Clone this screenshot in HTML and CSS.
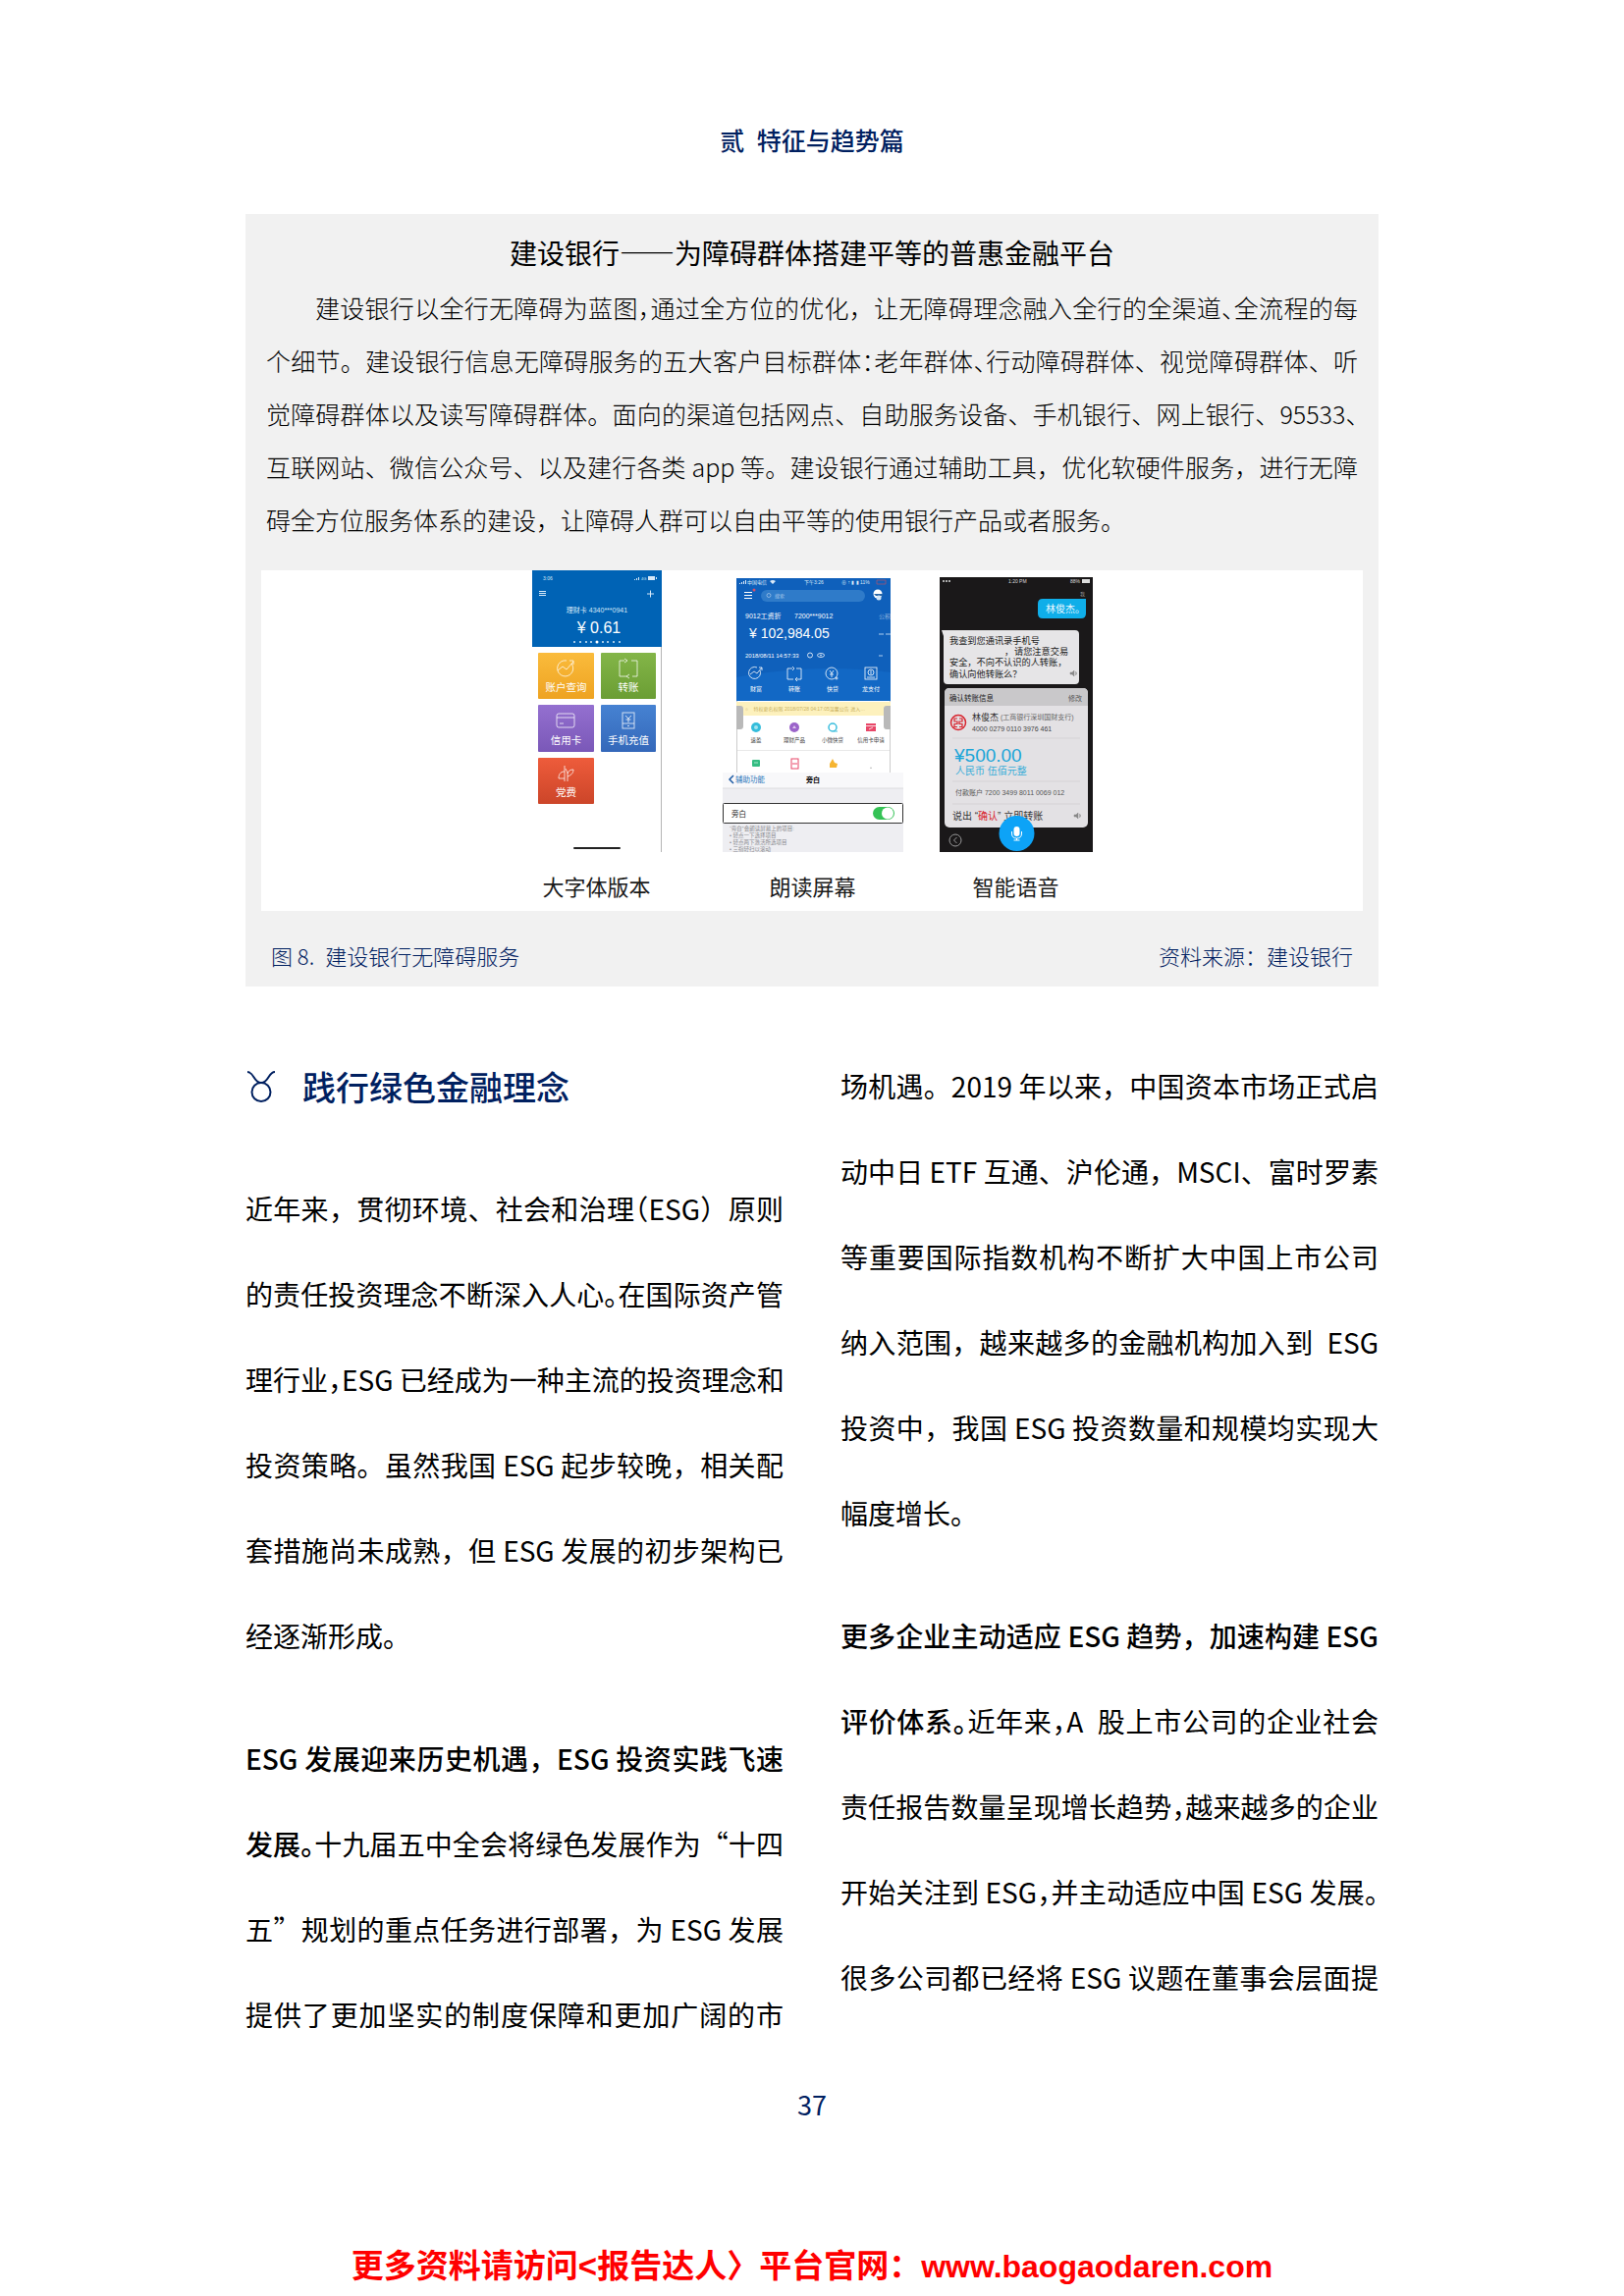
FILE: index.html
```html
<!DOCTYPE html>
<html lang="zh-CN">
<head>
<meta charset="utf-8">
<meta name="viewport" content="width=device-width, initial-scale=1">
<title>贰 特征与趋势篇</title>
<link rel="stylesheet" href="styles.css">
</head>
<body>
<div class="page">
  <header class="running-head">贰&ensp;特征与趋势篇</header>

  <main>
    <section class="case">
      <h2 class="case-title">建设银行——为障碍群体搭建平等的普惠金融平台</h2>
      <p class="case-text">
        <span class="line line-indent">建设银行以全行无障碍为蓝图<span class="half">，</span>通过全方位的优化，让无障碍理念融入全行的全渠道<span class="half">、</span>全流程的每</span>
        <span class="line">个细节。建设银行信息无障碍服务的五大客户目标群体<span class="half">：</span>老年群体<span class="half">、</span>行动障碍群体、视觉障碍群体、听</span>
        <span class="line">觉障碍群体以及读写障碍群体。面向的渠道包括网点、自助服务设备、手机银行、网上银行、95533<span class="half">、</span></span>
        <span class="line">互联网站、微信公众号、以及建行各类 app 等。建设银行通过辅助工具，优化软硬件服务，进行无障</span>
        <span class="line line-end">碍全方位服务体系的建设，让障碍人群可以自由平等的使用银行产品或者服务。</span>
      </p>

      <div class="phones">
        <figure class="phone phone-first">
          <svg width="132" height="287" viewBox="0 0 132 287" role="img" aria-label="大字体版本">
            <defs>
              <linearGradient id="yellow" x2="0" y2="1"><stop stop-color="#fabb3c"/><stop offset="1" stop-color="#eea321"/></linearGradient>
              <linearGradient id="green" x2="0" y2="1"><stop stop-color="#83b548"/><stop offset="1" stop-color="#6b9e34"/></linearGradient>
              <linearGradient id="purple" x2="0" y2="1"><stop stop-color="#9470d0"/><stop offset="1" stop-color="#7a58b8"/></linearGradient>
              <linearGradient id="blue" x2="0" y2="1"><stop stop-color="#4682d2"/><stop offset="1" stop-color="#3468ba"/></linearGradient>
              <linearGradient id="red" x2="0" y2="1"><stop stop-color="#ee5c3b"/><stop offset="1" stop-color="#cc4529"/></linearGradient>
            </defs>
            <path d="M131.500 78V287" stroke="#b5b5b5"/>
            <rect width="132" height="78" fill="#0063b5"/>
            <g fill="#d5e8f8">
              <text x="11" y="10" font-size="5">3:06</text>
              <path d="M104 10v-1h1v1zm2 0v-2h1v2zm2 0v-3h1v3zM118 6h7v4h-7zM126 7h1v2h-1z"/>
              <text x="111" y="10" font-size="4">4G</text>
              <text x="66" y="43" font-size="7" text-anchor="middle">理财卡 4340***0941</text>
              <text x="68" y="64" font-size="16" fill="#fff" text-anchor="middle">¥ 0.61</text>
              <g><circle cx="43" cy="73" r="1"/><circle cx="49" cy="73" r="1"/><circle cx="55" cy="73" r="1"/><circle cx="60" cy="73" r="1"/><circle cx="66" cy="73" r="1.500" fill="#fff"/><circle cx="72" cy="73" r="1"/><circle cx="77" cy="73" r="1"/><circle cx="83" cy="73" r="1"/><circle cx="89" cy="73" r="1"/></g>
            </g>
            <path d="M7 21.500h7M7 23.500h7M7 25.500h7M117 24h7M120.500 20.500v7" stroke="#d5e8f8" fill="none"/>
            <rect x="6" y="84" width="57" height="47" rx="1" fill="url(#yellow)"/>
            <rect x="70" y="84" width="56" height="47" rx="1" fill="url(#green)"/>
            <rect x="6" y="137" width="57" height="48" rx="1" fill="url(#purple)"/>
            <rect x="70" y="137" width="56" height="48" rx="1" fill="url(#blue)"/>
            <rect x="6" y="191" width="57" height="47" rx="1" fill="url(#red)"/>
            <g fill="none" stroke="#fff" stroke-opacity=".75">
              <path d="M40 95a8 8 0 1 1-5-3M26 102l5-4 4 3 7-8M38 92h4v4"/>
              <path d="M94 92h-5v16h7M101 92h6v16h-5M94 90l3 2-3 2M99 106l-3 2 3 2"/>
              <rect x="25" y="146" width="18" height="14" rx="2"/><path d="M25 150h18M28 156h4"/>
              <rect x="92" y="145" width="12" height="16"/><path d="M92 156h12M97 158.500h2M95 148l3 3 3-3M98 151v4M95.500 152h5"/>
              <path d="M33 199v16M33 205c-5 0-6 4-6 7h6M36 215v-9l-2-4M36 210c3-1 6-3 6-7-3 0-5 1-6 4"/>
            </g>
            <g fill="#fff" font-size="10.500" text-anchor="middle">
              <text x="34.500" y="123">账户查询</text><text x="98" y="123">转账</text>
              <text x="34.500" y="177">信用卡</text><text x="98" y="177">手机充值</text>
              <text x="34.500" y="230">党费</text>
            </g>
            <rect x="42" y="282" width="48" height="2" rx="1" fill="#222"/>
          </svg>
          <figcaption>大字体版本</figcaption>
        </figure>

        <figure class="phone">
          <svg width="184" height="279" viewBox="0 0 184 279" role="img" aria-label="朗读屏幕">
            <path d="M14.500 125v73M170.500 125v73" stroke="#ccc"/>
            <rect x="14" width="157" height="125" fill="#0f60bb"/>
            <path d="M14 101q80-15 157-5v29H14z" fill="#1268c5"/>
            <g fill="#dbe9f8" font-size="5">
              <path d="M17 6v-1h1v1zm2 0v-2h1v2zm2 0v-3h1v3zm2 0v-4h1v4zM48 3q3-2 6 0l-3 3z"/>
              <text x="25" y="6">中国电信</text><text x="83" y="6">下午3:26</text><text x="121" y="6">⊕ ↑ ▮ ▮ 11%</text>
            </g>
            <path d="M157 2h9v4h-9z" fill="none" stroke="#cf5060" stroke-width=".6"/>
            <rect x="39" y="12" width="106" height="12" rx="6" fill="#2f7bc9"/>
            <circle cx="47" cy="17.500" r="2" fill="none" stroke="#a9c9ea" stroke-width=".7"/>
            <text x="53" y="20" font-size="5" fill="#a9c9ea">搜索</text>
            <path d="M22 14.500h8M22 17.500h8M22 20.500h8" stroke="#fff"/><circle cx="32" cy="12" r="1.500" fill="#d55069"/>
            <circle cx="158" cy="16" r="4.500" fill="#fff"/><path d="M154 16h9v2h-7z" fill="#2a68a8"/><circle cx="159" cy="20" r="2.500" fill="#d3e7f9"/>
            <g fill="#fff">
              <text x="23" y="41" font-size="7">9012工资折</text><text x="73" y="41" font-size="7">7200***9012</text>
              <text x="27" y="61" font-size="14">¥ 102,984.05</text>
              <text x="23" y="81" font-size="6">2018/08/11 14:57:33</text>
              <text x="159" y="41" font-size="6" opacity=".5">公积</text><path d="M159 57h5M166 57h5M159 79h4" stroke="#b0cff0"/>
              <g font-size="6" text-anchor="middle"><text x="34" y="115">财富</text><text x="73" y="115">转账</text><text x="112" y="115">快贷</text><text x="151" y="115">龙支付</text></g>
            </g>
            <g fill="none" stroke="#fff" stroke-width=".8">
              <path d="M38 94a6 6 0 1 1-3-3M28 98l4-3 3 2 5-6M37 91h3v3"/>
              <path d="M71 92h-5v11h6M75 92h5v11h-5M71 90l2 2-2 2M76 101l-2 2 2 2"/>
              <circle cx="111" cy="97" r="6"/><path d="M109 94l2 3 2-3M111 97v4M109 98h4"/><circle cx="116" cy="102" r="1"/>
              <rect x="145" y="91" width="12" height="12"/><circle cx="151" cy="96" r="3"/><path d="M147 101h8M151 94v4"/>
              <circle cx="89" cy="78.500" r="2.500"/><ellipse cx="100" cy="78.500" rx="3.500" ry="2"/><circle cx="100" cy="78.500" r=".5"/>
            </g>
            <rect x="14" y="126" width="157" height="14" fill="#fdf1bd"/>
            <text x="22" y="135" font-size="5" fill="#c9b060">☼　特权更名权限 2018/07/28 04:17:05温馨公告 进入…</text>
            <path d="M14 130h4q3 0 3 3v18q0 3-3 3h-4zM171 130h-4q-3 0-3 3v18q0 3 3 3h4z" fill="#b9b9b9"/>
            <circle cx="34" cy="152" r="5" fill="#35bddb"/><circle cx="34" cy="152" r="2" fill="#a3e4ef"/>
            <circle cx="73" cy="152" r="5" fill="#9b64ca"/><path d="M71 153l2-3 2 3z" fill="#dfc6ee"/>
            <circle cx="112" cy="152" r="4" fill="none" stroke="#39bddd" stroke-width="1.500"/><path d="M113 156h4" stroke="#39bddd"/>
            <rect x="146" y="148" width="10" height="8" fill="#e84768"/><path d="M146 150.500h10M149 154l4-2" stroke="#fff" stroke-width=".8"/>
            <g fill="#444" font-size="5.500" text-anchor="middle"><text x="34" y="167">速盈</text><text x="73" y="167">理财产品</text><text x="112" y="167">小微快贷</text><text x="151" y="167">信用卡申请</text></g>
            <path d="M15 175.500h155" stroke="#e9e9e9"/>
            <rect x="30" y="185" width="8" height="7" rx="1" fill="#35bd83"/><path d="M32 188h4" stroke="#a9e6cb"/>
            <rect x="70" y="184" width="7" height="10" fill="none" stroke="#e84768"/><path d="M71 189h5" stroke="#e84768"/>
            <path d="M109 189l3-5 2 4 3 1-1 4h-7z" fill="#f6b532"/><path d="M150 194l1-2 1 2z" fill="#bbb"/>
            <rect y="198" width="184" height="81" fill="#eeeef2"/><rect y="198" width="184" height="16" fill="#f8f8fa"/><path d="M0 214h184" stroke="#d2d2d6" stroke-width=".7"/>
            <path d="M11 201l-4 4 4 4" fill="none" stroke="#1c5aa4" stroke-width="1.500"/>
            <text x="13" y="208" font-size="7.500" fill="#2b77bb">辅助功能</text><text x="92" y="208" font-size="7" font-weight="700" text-anchor="middle">旁白</text>
            <rect x=".500" y="229.500" width="183" height="20" rx="1" fill="#fff" stroke="#333"/>
            <text x="9" y="243" font-size="7.500" fill="#222">旁白</text>
            <rect x="153" y="233" width="22" height="13" rx="6.500" fill="#34c255"/><circle cx="168" cy="239.500" r="6" fill="#fff"/>
            <g font-size="5.500" fill="#88888d"><text x="7" y="257">“旁白”会朗读屏幕上的项目:</text><text x="7" y="264">• 轻点一下选择项目</text><text x="7" y="271">• 轻点两下激活所选项目</text><text x="7" y="278">• 三指轻扫以滚动</text></g>
          </svg>
          <figcaption>朗读屏幕</figcaption>
        </figure>

        <figure class="phone">
          <svg width="156" height="280" viewBox="0 0 156 280" role="img" aria-label="智能语音">
            <rect width="156" height="280" fill="#1a1819"/>
            <g fill="#ddd" font-size="5"><circle cx="4" cy="4" r="1"/><circle cx="7" cy="4" r="1"/><circle cx="10" cy="4" r="1"/><text x="70" y="6">1:20 PM</text><text x="133" y="6">88%</text><rect x="145" y="2" width="8" height="4"/><text x="143" y="19" fill="#999">我</text></g>
            <path d="M105 22h44v15q0 5-5 5h-39q-5 0-5-5V27q0-5 5-5z" fill="#0faee9"/>
            <text x="108" y="36" font-size="10" fill="#e9f8ff">林俊杰。</text>
            <path d="M2 54h136q4 0 4 4v47q0 4-4 4H8q-4 0-4-4V60z" fill="#e6e5e7"/>
            <g font-size="9.200" fill="#222"><text x="10" y="68">我查到您通讯录手机号</text><text x="66" y="79">，</text><text x="76" y="79">请您注意交易</text><text x="10" y="90">安全，不向不认识的人转账，</text><text x="10" y="102">确认向他转账么？</text></g>
            <path d="M133 97h2l2-2v6l-2-2h-2zM138.500 96q2 2 0 4" fill="#888" stroke="#888" stroke-width=".5"/>
            <rect x="5" y="113" width="146" height="142" rx="5" fill="#e3e1e4"/>
            <path d="M5 131v-13q0-5 5-5h136q5 0 5 5v13z" fill="#c9c8ca"/>
            <text x="10" y="126" font-size="7.500" fill="#222">确认转账信息</text><text x="131" y="126" font-size="7" fill="#555">修改</text>
            <circle cx="19" cy="148" r="7.500" fill="none" stroke="#d8242e" stroke-width="1.500"/>
            <path d="M18 144h-3v3h3v2.500h-3v3h3M20 144h3v3h-3v2.500h3v3h-3" fill="none" stroke="#d8242e" stroke-width="1.200"/>
            <text x="33" y="146" font-size="9" fill="#333">林俊杰</text><text x="62" y="145" font-size="7" fill="#666">(工商银行深圳国财支行)</text>
            <text x="33" y="157" font-size="7" fill="#444">4000 0279 0110 3976 461</text>
            <text x="15" y="188" font-size="19" fill="#1ba5d8">¥500.00</text>
            <text x="16" y="201" font-size="10" fill="#39add8">人民币 伍佰元整</text>
            <text x="16" y="222" font-size="7" fill="#555">付款账户 7200 3499 8011 0069 012</text>
            <path d="M13 164h130M13 208h130M13 231h130" stroke="#cfcdd0" stroke-width=".7"/>
            <text x="13" y="247" font-size="10" fill="#333">说出 “<tspan fill="#d8242e">确认</tspan>” 立即转账</text>
            <path d="M137 242h2l2-2v6l-2-2h-2zM142.500 241q2 2 0 4" fill="#888" stroke="#888" stroke-width=".5"/>
            <circle cx="78.500" cy="261" r="18" fill="#0da3f7"/>
            <rect x="75.500" y="254" width="6" height="10" rx="3" fill="#fff"/><path d="M73.500 259v2q0 5 5 5t5-5v-2M78.500 266v2M75.500 268h6" fill="none" stroke="#fff"/>
            <circle cx="16" cy="268" r="6" fill="none" stroke="#999"/><path d="M17.500 265l-3 3 3 3" fill="none" stroke="#999"/>
          </svg>
          <figcaption>智能语音</figcaption>
        </figure>
      </div>

      <div class="source">
        <span>图 8.&ensp;建设银行无障碍服务</span>
        <span>资料来源：建设银行</span>
      </div>
    </section>

    <div class="columns">
      <div class="column">
        <h2 class="section-title">
          <svg width="32" height="34" viewBox="0 0 32 34" aria-hidden="true"><g fill="none" stroke="#002060" stroke-width="2"><path d="M2 2c7 0 6 11 14 11S23 2 30 2"/><circle cx="16" cy="22.500" r="9.500"/></g></svg>
          践行绿色金融理念
        </h2>
        <p>
          <span class="line">近年来，贯彻环境、社会和治理<span class="half">（</span>ESG）原则</span>
          <span class="line">的责任投资理念不断深入人心<span class="half">。</span>在国际资产管</span>
          <span class="line">理行业<span class="half">，</span>ESG 已经成为一种主流的投资理念和</span>
          <span class="line">投资策略。虽然我国 ESG 起步较晚，相关配</span>
          <span class="line">套措施尚未成熟，但 ESG 发展的初步架构已</span>
          <span class="line line-end">经逐渐形成。</span>
        </p>
        <p>
          <span class="line"><strong>ESG 发展迎来历史机遇，ESG 投资实践飞速</strong></span>
          <span class="line"><strong>发展<span class="half">。</span></strong>十九届五中全会将绿色发展作为“十四</span>
          <span class="line">五”规划的重点任务进行部署，为 ESG 发展</span>
          <span class="line">提供了更加坚实的制度保障和更加广阔的市</span>
        </p>
      </div>
      <div class="column">
        <p>
          <span class="line">场机遇。2019 年以来，中国资本市场正式启</span>
          <span class="line">动中日 ETF 互通、沪伦通，MSCI、富时罗素</span>
          <span class="line">等重要国际指数机构不断扩大中国上市公司</span>
          <span class="line">纳入范围，越来越多的金融机构加入到&ensp;ESG</span>
          <span class="line">投资中，我国 ESG 投资数量和规模均实现大</span>
          <span class="line line-end">幅度增长。</span>
        </p>
        <p>
          <span class="line"><strong>更多企业主动适应 ESG 趋势，加速构建 ESG</strong></span>
          <span class="line"><strong>评价体系<span class="half">。</span></strong>近年来<span class="half">，</span>A&ensp;股上市公司的企业社会</span>
          <span class="line">责任报告数量呈现增长趋势<span class="half">，</span>越来越多的企业</span>
          <span class="line">开始关注到 ESG<span class="half">，</span>并主动适应中国 ESG 发展<span class="half">。</span></span>
          <span class="line">很多公司都已经将 ESG 议题在董事会层面提</span>
        </p>
      </div>
    </div>
  </main>

  <div class="page-number">37</div>
  <footer class="promo">更多资料请访问&lt;报告达人〉平台官网：<a href="http://www.baogaodaren.com">www.baogaodaren.com</a></footer>
</div>
</body>
</html>
```
FILE: styles.css
```css
* {
  box-sizing: border-box;
}

body {
  margin: 0;
  background: #fff;
  color: #000;
  font-family: "Noto Sans CJK SC", sans-serif;
}

h2,
p,
figure {
  margin: 0;
}

.page {
  width: min(1154px, 100% - 32px);
  margin: 0 auto;
  padding-top: 124px;
}

.running-head {
  margin-bottom: 58px;
  color: #002060;
  font-size: 25px;
  font-weight: 500;
  line-height: 36px;
  text-align: center;
}

/* Case study card */
.case {
  padding: 12px 16px 17px;
  background: #f1f1f1;
}

.case-title {
  margin-bottom: 2px;
  font-size: 28px;
  font-weight: 400;
  line-height: 54px;
  text-align: center;
}

.case-text {
  padding: 0 5px;
  font-size: 25px;
  font-weight: 300;
  line-height: 54px;
}

/* Each printed line fills the measure; the last one of a paragraph does not */
.line {
  display: block;
  text-align: justify;
  text-align-last: justify;
  white-space: nowrap;
}

.line-indent {
  padding-left: 50px;
}

.line-end {
  text-align-last: start;
}

.half {
  font-feature-settings: "halt";
}

.phones {
  display: flex;
  justify-content: center;
  align-items: flex-end;
  gap: 37px;
  margin-top: 25px;
  padding-bottom: 10px;
  background: #fff;
}

.phone-first {
  margin-right: 25px;
}

.phone svg {
  display: block;
  font-family: "Liberation Sans", "Noto Sans CJK SC", sans-serif;
}

.phone figcaption {
  margin-top: 18px;
  color: #1a1a1a;
  font-size: 22px;
  line-height: 32px;
  text-align: center;
}

.source {
  display: flex;
  justify-content: space-between;
  margin-top: 30px;
  padding: 0 10px;
  color: #002060;
  font-size: 22px;
  font-weight: 300;
  line-height: 30px;
}

/* Two-column body */
.columns {
  display: grid;
  grid-template-columns: 1fr 1fr;
  gap: 58px;
  margin-top: 58px;
  font-size: 28px;
  line-height: 87px;
}

.column {
  display: flex;
  flex-direction: column;
  gap: 38px;
  min-width: 0;
}

.column strong {
  font-weight: 500;
}

.section-title {
  display: flex;
  align-items: center;
  gap: 26px;
  color: #002060;
  font-size: 34px;
  font-weight: 500;
  line-height: 87px;
}

.page-number {
  margin-top: 30px;
  color: #002060;
  font-size: 27px;
  line-height: 36px;
  text-align: center;
}

.promo {
  margin-top: 124px;
  padding-bottom: 4px;
  color: #f00;
  font-family: "Liberation Sans", "Noto Sans CJK SC", sans-serif;
  font-size: 33px;
  font-weight: 700;
  line-height: 46px;
  text-align: center;
}

.promo a {
  color: inherit;
  font-size: 32px;
  text-decoration: none;
}
```
